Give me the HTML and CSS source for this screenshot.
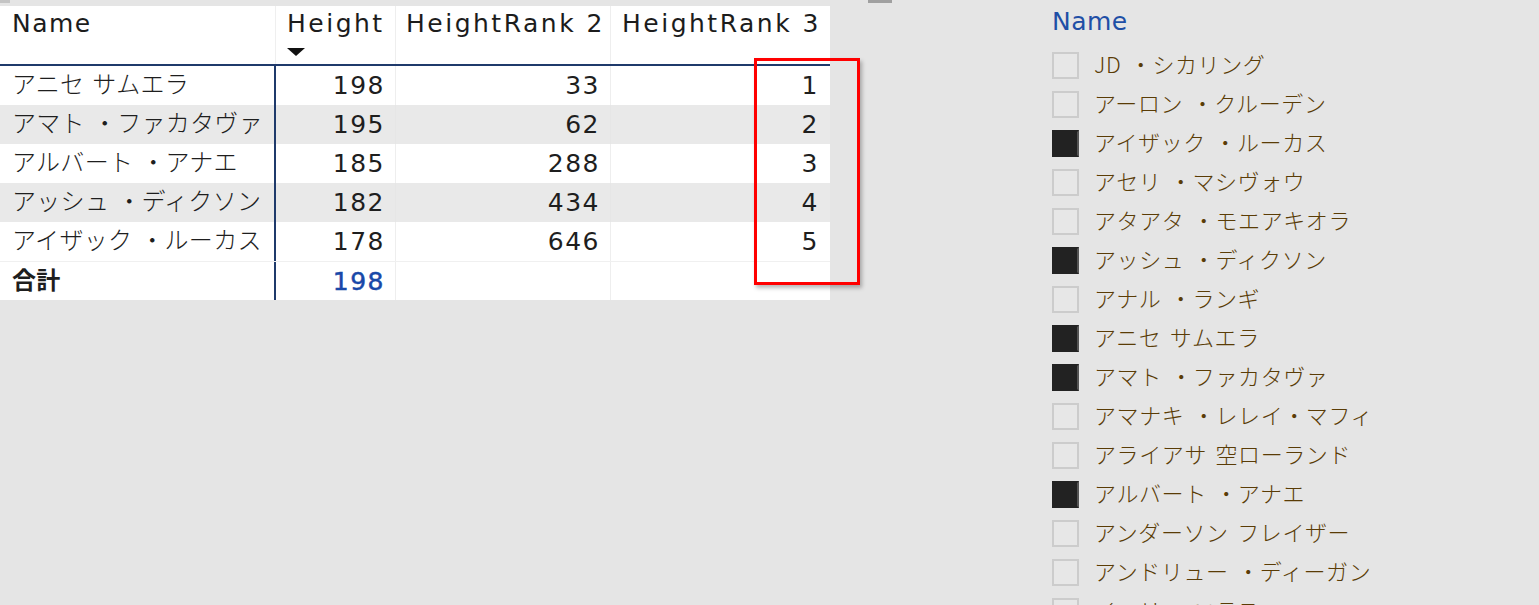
FILE: index.html
```html
<!DOCTYPE html>
<html lang="ja">
<head>
<meta charset="utf-8">
<title>Height ranking</title>
<link rel="stylesheet" href="styles.css">
</head>
<body>
<div class="page">
  <div class="handle handle-left"></div>
  <div class="handle handle-mid"></div>

  <div class="table">
    <div class="row head">
      <div class="cell c-name">Name</div>
      <div class="cell c-h">Height<span class="sort"></span></div>
      <div class="cell c-r2">HeightRank 2</div>
      <div class="cell c-r3">HeightRank 3</div>
    </div>
    <div class="row">
      <div class="cell c-name jp">アニセ サムエラ</div>
      <div class="cell c-h num">198</div>
      <div class="cell c-r2 num">33</div>
      <div class="cell c-r3 num">1</div>
    </div>
    <div class="row alt">
      <div class="cell c-name jp">アマト ・ファカタヴァ</div>
      <div class="cell c-h num">195</div>
      <div class="cell c-r2 num">62</div>
      <div class="cell c-r3 num">2</div>
    </div>
    <div class="row">
      <div class="cell c-name jp">アルバート ・アナエ</div>
      <div class="cell c-h num">185</div>
      <div class="cell c-r2 num">288</div>
      <div class="cell c-r3 num">3</div>
    </div>
    <div class="row alt">
      <div class="cell c-name jp">アッシュ ・ディクソン</div>
      <div class="cell c-h num">182</div>
      <div class="cell c-r2 num">434</div>
      <div class="cell c-r3 num">4</div>
    </div>
    <div class="row">
      <div class="cell c-name jp">アイザック ・ルーカス</div>
      <div class="cell c-h num">178</div>
      <div class="cell c-r2 num">646</div>
      <div class="cell c-r3 num">5</div>
    </div>
    <div class="row total">
      <div class="cell c-name jp">合計</div>
      <div class="cell c-h num total-num">198</div>
      <div class="cell c-r2 num"></div>
      <div class="cell c-r3 num"></div>
    </div>
  </div>

  <div class="highlight"></div>

  <div class="slicer">
    <div class="slicer-title">Name</div>
    <div class="item"><span class="box"></span><span class="label">JD ・シカリング</span></div>
    <div class="item"><span class="box"></span><span class="label">アーロン ・クルーデン</span></div>
    <div class="item"><span class="box on"></span><span class="label">アイザック ・ルーカス</span></div>
    <div class="item"><span class="box"></span><span class="label">アセリ ・マシヴォウ</span></div>
    <div class="item"><span class="box"></span><span class="label">アタアタ ・モエアキオラ</span></div>
    <div class="item"><span class="box on"></span><span class="label">アッシュ ・ディクソン</span></div>
    <div class="item"><span class="box"></span><span class="label">アナル ・ランギ</span></div>
    <div class="item"><span class="box on"></span><span class="label">アニセ サムエラ</span></div>
    <div class="item"><span class="box on"></span><span class="label">アマト ・ファカタヴァ</span></div>
    <div class="item"><span class="box"></span><span class="label">アマナキ ・レレイ・マフィ</span></div>
    <div class="item"><span class="box"></span><span class="label">アライアサ 空ローランド</span></div>
    <div class="item"><span class="box on"></span><span class="label">アルバート ・アナエ</span></div>
    <div class="item"><span class="box"></span><span class="label">アンダーソン フレイザー</span></div>
    <div class="item"><span class="box"></span><span class="label">アンドリュー ・ディーガン</span></div>
    <div class="item"><span class="box"></span><span class="label">イーリ ニコラス</span></div>
  </div>
</div>
</body>
</html>
```

FILE: styles.css
```css
html, body {
  margin: 0;
  padding: 0;
  background: #e5e5e5;
  overflow: hidden;
}

body {
  font-family: "DejaVu Sans", "Noto Sans CJK JP", sans-serif;
  color: #1e1e1e;
}

.page {
  position: relative;
  display: flex;
  align-items: flex-start;
  width: 1539px;
  height: 605px;
}

.handle {
  position: absolute;
  top: 0;
  height: 3px;
}

.handle-left {
  left: 0;
  width: 10px;
  background: #c4c4c4;
}

.handle-mid {
  left: 868px;
  width: 24px;
  background: #a0a0a0;
}

.table {
  width: 830px;
  margin-top: 6px;
  background: #ffffff;
}

.row {
  display: grid;
  grid-template-columns: 276px 120px 215px 219px;
  height: 39px;
  box-sizing: border-box;
}

.row.alt {
  background: #e9e9e9;
}

.row.head {
  height: 60px;
  border-bottom: 2px solid #1f3a6b;
}

.row.total {
  border-top: 1px solid #f0f0f0;
  height: 39px;
}

.cell {
  box-sizing: border-box;
  line-height: 39px;
  white-space: nowrap;
  overflow: hidden;
}

.head .cell {
  font-size: 25px;
  letter-spacing: 2.5px;
  line-height: 30px;
  padding: 3px 0 0 11px;
  color: #1c1c1c;
  position: relative;
}

.head .c-name {
  padding-left: 12px;
  letter-spacing: 1.5px;
  border-right: 1px solid #efefef;
}

.c-name {
  border-right: 2px solid #1f3a6b;
}

.c-h, .c-r2 {
  border-right: 1px solid #eeeeee;
}

.head .c-r2 {
  padding-left: 10px;
}

.alt .c-h, .alt .c-r2 {
  border-right-color: #e6e6e6;
}

.jp {
  font-size: 24px;
  font-weight: 300;
  letter-spacing: 0.3px;
  padding-left: 12px;
}

.num {
  font-size: 25px;
  letter-spacing: 1.5px;
  text-align: right;
  padding-right: 10px;
}

.c-r3.num {
  padding-right: 11px;
}

.total .jp {
  font-weight: 700;
}

.total-num {
  color: #1848a8;
  -webkit-text-stroke: 0.5px #1848a8;
}

.sort {
  position: absolute;
  left: 11px;
  top: 42px;
  width: 0;
  height: 0;
  border-left: 9px solid transparent;
  border-right: 9px solid transparent;
  border-top: 8px solid #111111;
}

.highlight {
  position: absolute;
  left: 754px;
  top: 58px;
  width: 106px;
  height: 227px;
  box-sizing: border-box;
  border: 3px solid #ff0000;
  box-shadow: 2px 3px 4px rgba(0, 0, 0, 0.28);
}

.slicer {
  margin-left: 222px;
  display: flex;
  flex-direction: column;
}

.slicer-title {
  font-size: 25px;
  letter-spacing: 0.5px;
  line-height: 30px;
  padding-top: 7px;
  height: 39px;
  box-sizing: border-box;
  color: #1f4fa6;
  margin-bottom: 7px;
}

.item {
  display: flex;
  align-items: center;
  height: 39px;
  flex-shrink: 0;
}

.box {
  width: 27px;
  height: 27px;
  box-sizing: border-box;
  border: 2px solid #cccccc;
  background: #e7e7e7;
  flex-shrink: 0;
}

.box.on {
  background: #222222;
  border-color: #222222;
  border-right-color: #555555;
}

.label {
  margin-left: 15px;
  padding-bottom: 5px;
  font-family: "Noto Sans CJK JP", sans-serif;
  font-size: 22px;
  font-weight: 300;
  letter-spacing: 0.6px;
  word-spacing: 3px;
  color: #5a3c06;
  white-space: nowrap;
  line-height: 30px;
}
```
